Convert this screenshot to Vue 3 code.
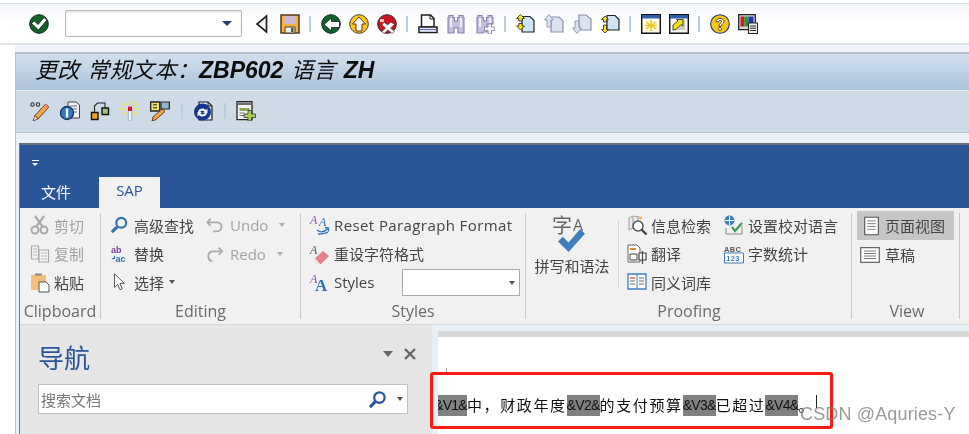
<script setup>
// 工具栏分组：图标 id 对应下面模板里的 symbol
const topTools = [
  ['back', 'save'],
  ['green', 'yellow', 'red'],
  ['print', 'find', 'findNext'],
  ['first', 'prev', 'next', 'last'],
  ['winNew', 'winLink'],
  ['help', 'monitor']
]
const subTools = [['glasses', 'docInfo', 'tree', 'wand', 'pencilBox'], ['refresh'], ['addDoc']]
const docParts = [
  { t: '&V1&', mark: true, cut: true },
  { t: '中，财政年度' },
  { t: '&V2&', mark: true },
  { t: '的支付预算' },
  { t: '&V3&', mark: true },
  { t: '已超过' },
  { t: '&V4&', mark: true },
  { t: '。' }
]
</script>

<template>
  <div class="page">
    <svg width="0" height="0" class="defs">
      <defs>
        <symbol id="check" viewBox="0 0 20 20">
          <circle cx="10" cy="10" r="9.300" fill="#12602a" stroke="#0b2a16" />
          <path d="M2.500 9.500l3-2.500 3.500 3.500 6-7 3 2.500-8.500 10z" fill="#fff" stroke="#0d1f14" stroke-width=".8" />
        </symbol>
        <symbol id="back" viewBox="0 0 20 20">
          <path d="M12.500 2v16L3 10z" fill="#f4f4f4" stroke="#222" stroke-width="1.700" />
        </symbol>
        <symbol id="save" viewBox="0 0 20 20">
          <path d="M1 1h18v18H1z" fill="#f6b43c" stroke="#4d3a22" stroke-width="1.500" />
          <path d="M4.500 2h11v8h-11z" fill="#cdb8d8" />
          <path d="M5 13h10v6H5z" fill="#f1ecf2" stroke="#4d3a22" />
          <path d="M11 14h2.500v4H11z" fill="#555" />
        </symbol>
        <symbol id="green" viewBox="0 0 20 20">
          <circle cx="10" cy="10" r="9.300" fill="#0f6429" stroke="#0d2c18" />
          <path d="M3 10.500L10.500 4v3.500h8v6h-8V17z" fill="#fff" stroke="#1a1a1a" stroke-width=".8" />
        </symbol>
        <symbol id="yellow" viewBox="0 0 20 20">
          <circle cx="10" cy="10" r="9.300" fill="#f3c818" stroke="#463c30" />
          <path d="M10 3l6.500 7H13v7H7v-7H3.500z" fill="#fff" stroke="#7a2d12" stroke-width="1" />
        </symbol>
        <symbol id="red" viewBox="0 0 20 20">
          <circle cx="10" cy="10" r="9.300" fill="#c8161f" stroke="#3d1a20" />
          <path d="M3 5h4v3H3z" fill="#fde" opacity=".8" />
          <path d="M7 8l3.500 3 3.500-3 3.500 2.500-4 3.500 4 3.500-2.500 2-4-3.500-4 3.500-2-2 3.500-3.500-3.500-3z" fill="#fff" stroke="#444" stroke-width=".7" />
        </symbol>
        <symbol id="print" viewBox="0 0 20 20">
          <path d="M3.500 1h9l3.500 3.500V13H3.500z" fill="#fff" stroke="#1c1c1c" stroke-width="1.500" />
          <path d="M12 1v4h4" fill="none" stroke="#1c1c1c" />
          <path d="M1 13h18v5.500H1z" fill="#fff" stroke="#1c1c1c" stroke-width="1.500" />
          <path d="M2 15.500h16" stroke="#5e6cc0" stroke-width="1.300" />
        </symbol>
        <symbol id="find" viewBox="0 0 20 20">
          <path d="M3 1.500h4v2h1.500V7h3V3.500H13v-2h4v2h1V19h-6v-5H8v5H2V3.500h1z" fill="#c3bfdd" stroke="#8483ab" stroke-width="1.100" />
          <path d="M5 4v9M15 4v9" stroke="#efeff7" stroke-width="2" />
        </symbol>
        <symbol id="findNext" viewBox="0 0 20 20">
          <path d="M3 1.500h4v2h1.500V7h3V3.500H13v-2h4v2h1V10h-6v8H8v1H2V3.500h1z" fill="#c3bfdd" stroke="#8483ab" stroke-width="1.100" />
          <path d="M5 4v9M15 4v5" stroke="#efeff7" stroke-width="2" />
          <path d="M13 10h3.500v3H20v3.500h-3.500V20H13v-3.500H9.500V13H13z" fill="#f4f4fa" stroke="#8483ab" stroke-width=".9" />
        </symbol>
        <symbol id="first" viewBox="0 0 20 20">
          <path d="M7 2.500h8l4 4v11.500H7z" fill="#cfe4f5" stroke="#222" stroke-width="1.200" />
          <path d="M4.500 0.500l4 4H6.200v2.500h-3.400V4.500H.5zM4.500 16l4-4H6.200V9.500h-3.400V12H.5z" transform="translate(1)" fill="#f7e612" stroke="#222" stroke-width=".8" />
        </symbol>
        <symbol id="prev" viewBox="0 0 20 20">
          <path d="M7 3h8l4 4v11H7z" fill="#dbe2ef" stroke="#8e90ad" stroke-width="1.200" />
          <path d="M5 .5L9.500 6H7v7H3V6H.5z" fill="#dbe2ef" stroke="#8e90ad" stroke-width=".9" />
        </symbol>
        <symbol id="next" viewBox="0 0 20 20">
          <path d="M7 1h7l5 4v11H7z" fill="#dbe2ef" stroke="#8e90ad" stroke-width="1.200" />
          <path d="M5 19.500L.5 14H3V7h4v7h2.500z" fill="#dbe2ef" stroke="#8e90ad" stroke-width=".9" />
        </symbol>
        <symbol id="last" viewBox="0 0 20 20">
          <path d="M7 1.500h8l4 4V16H7z" fill="#cfe4f5" stroke="#222" stroke-width="1.200" />
          <path d="M5 2l3.500 3.500H6.500V8h-3V5.500h-2zM5 19l3.500-3.500H6.500V11h-3v4.500h-2z" fill="#f7e612" stroke="#222" stroke-width=".8" />
        </symbol>
        <symbol id="winNew" viewBox="0 0 20 20">
          <path d="M.7.700h18.600v18.600H.7z" fill="#fbfbe8" stroke="#111" stroke-width="1.400" />
          <path d="M1 1h18v3.500H1z" fill="#2f5ea8" />
          <path d="M10 6v11M5 8l10 7M15 8L5 15M4 11.500h12" stroke="#eec818" stroke-width="1.500" />
        </symbol>
        <symbol id="winLink" viewBox="0 0 20 20">
          <path d="M.7.700h18.600v18.600H.7z" fill="#f4f4f4" stroke="#111" stroke-width="1.400" />
          <path d="M1 1h18v3.500H1z" fill="#2f5ea8" />
          <path d="M14.500 5.500H16V16H7v-1" fill="#ccc" />
          <path d="M4 16V11l5-4-1.500-1.500H14v6.500l-2-1.500-5 5z" fill="#f3e011" stroke="#222" stroke-width=".8" />
        </symbol>
        <symbol id="help" viewBox="0 0 20 20">
          <circle cx="10" cy="10" r="9.300" fill="#f5c61a" stroke="#22386e" stroke-width="1.100" />
          <path d="M6 7.500C6 3.500 14 3.500 14 7.500c0 2.500-3 2.500-3.200 5H9c0-3.500 2.700-3.500 2.700-5.200 0-1.600-3.300-1.400-3.300.7z" fill="#fff" stroke="#111" stroke-width=".7" />
          <circle cx="10" cy="15" r="1.500" fill="#fff" stroke="#111" stroke-width=".6" />
        </symbol>
        <symbol id="monitor" viewBox="0 0 20 20">
          <path d="M.7.700h16.600v15H.7z" fill="#d8d8d8" stroke="#222" stroke-width="1.300" />
          <path d="M2.500 2.500h4v10h-4z" fill="#c81e1e" />
          <path d="M6.500 2.500h4v10h-4z" fill="#1aa02c" />
          <path d="M10.500 2.500h5v10h-5z" fill="#2436b8" />
          <path d="M10.500 9h9v10.500h-9z" fill="#f2f2f2" stroke="#222" stroke-width="1.100" />
          <path d="M12 12h6M12 14.200h6M12 16.500h6" stroke="#222" />
        </symbol>
        <symbol id="glasses" viewBox="0 0 20 20">
          <path d="M5 14.500L15.500 3l3.500 3L8 18z" fill="#f2a648" stroke="#5a3210" stroke-width=".9" />
          <path d="M15.500 3l3.500 3-1.500 1.500-3.500-3z" fill="#e9838a" />
          <path d="M5 14.500L8 18l-5 2z" fill="#f5e2c0" stroke="#5a3210" stroke-width=".8" />
          <circle cx="2.500" cy="3.500" r="1.700" fill="none" stroke="#333" stroke-width="1.100" />
          <circle cx="8" cy="3.500" r="1.700" fill="none" stroke="#333" stroke-width="1.100" />
        </symbol>
        <symbol id="docInfo" viewBox="0 0 20 20">
          <path d="M8 1h8l3.500 3v13H8z" fill="#f2f2f2" stroke="#444" />
          <path d="M10 5h7M10 8h7M10 11h7" stroke="#6a6a8c" />
          <circle cx="7" cy="12" r="6.500" fill="#2d7ac2" stroke="#17305e" stroke-width="1.300" />
          <path d="M7 7.500v9" stroke="#fff" stroke-width="2.400" />
        </symbol>
        <symbol id="tree" viewBox="0 0 20 20">
          <path d="M1.500 11.500h6.500v7H1.500z" fill="#f0a52a" stroke="#111" stroke-width="1.400" />
          <path d="M12 7h6.500v6.500H12z" fill="#a8c078" stroke="#111" stroke-width="1.400" />
          <path d="M4.500 11V5l3-3h7.500v4.500" fill="none" stroke="#222" stroke-width="1.100" />
        </symbol>
        <symbol id="wand" viewBox="0 0 20 20">
          <path d="M8.300 9h3.400v11H8.300z" fill="#eef3f8" stroke="#8ea3b8" stroke-width=".7" />
          <path d="M8 5.500h4V10H8z" fill="#e01822" />
          <path d="M10 0v3.500M3 2l3 3M17 2l-3 3M0 8h4.500M20 8h-4.500M3 14l3-3M17 14l-3-3" stroke="#f3ea20" stroke-width="1.400" />
        </symbol>
        <symbol id="pencilBox" viewBox="0 0 20 20">
          <path d="M.7 1h9v9h-9z" fill="#eee26a" stroke="#222" stroke-width="1.300" />
          <path d="M11 1h8.300v7H11z" fill="#8fb6ce" stroke="#222" stroke-width="1.200" />
          <path d="M3 3.800h4M3 6.800h4" stroke="#222" />
          <path d="M3 16l9-8 3 2.500-9 8-4 1.500z" fill="#f2a648" stroke="#5a3210" stroke-width=".9" />
        </symbol>
        <symbol id="refresh" viewBox="0 0 20 20">
          <path d="M6 1h9l4 4v14H6z" fill="#e3e7ef" stroke="#1a1a1a" stroke-width="1.200" />
          <path d="M15 1v4h4" fill="none" stroke="#1a1a1a" />
          <circle cx="9.500" cy="11" r="8.500" fill="#17378f" />
          <path d="M5 10.500c1-3.500 6-4 8-1.500l1.500-1.500V12h-4.500l1.500-1.500C10 9 7.500 9.500 6.800 11.500zM14 12.500c-1 3.500-6 4-8 1.500L4.500 15.500V11H9l-1.500 1.500c1.500 1.500 4 1 4.700-1z" fill="#eef2fa" />
        </symbol>
        <symbol id="addDoc" viewBox="0 0 20 20">
          <path d="M1 .700h15v18H1z" fill="#f2f2f2" stroke="#222" stroke-width="1.300" />
          <path d="M2 1.500h13v2.500H2z" fill="#6c6c6c" />
          <path d="M3.500 7h10v3h-10z" fill="#8fa55e" />
          <path d="M3.500 12h5M3.500 14.500h5" stroke="#777" />
          <path d="M12 9.500h3.500V13H19.500v3.500h-4V20H12v-3.500H8V13h4z" fill="#a8d052" stroke="#333" stroke-width=".8" />
        </symbol>
      </defs>
    </svg>

    <div class="topbar">
      <svg class="ti ok"><use href="#check" /></svg>
      <div class="combo"><span class="combo-arrow"></span></div>
      <template v-for="(group, i) in topTools" :key="i">
        <span v-if="i" class="tsep"></span>
        <svg v-for="name in group" :key="name" class="ti" :class="name"><use :href="'#' + name" /></svg>
      </template>
    </div>
    <div class="strip"></div>

    <div class="frame">
      <div class="titlebar">
        <span class="cn">更改</span> <span class="cn">常规文本：</span>ZBP602 <span class="cn">语言</span> ZH
      </div>
      <div class="subbar">
        <template v-for="(group, i) in subTools" :key="i">
          <span v-if="i" class="tsep"></span>
          <svg v-for="name in group" :key="name" class="ti"><use :href="'#' + name" /></svg>
        </template>
      </div>

      <div class="canvas">
        <div class="word">
          <div class="quick"><span class="quick-bar"></span><span class="quick-arrow"></span></div>
          <div class="tabs">
            <span class="tab">文件</span>
            <span class="tab on">SAP</span>
          </div>

          <div class="ribbon">
            <section class="group g-clip">
              <div class="body">
                <div class="item off">
                  <svg class="ri" viewBox="0 0 20 20"><circle cx="5" cy="15" r="3.500" fill="none" stroke="#aaa" stroke-width="2" /><circle cx="14" cy="15" r="3.500" fill="none" stroke="#aaa" stroke-width="2" /><path d="M6 12L14 1M13 12L5 1" stroke="#aaa" stroke-width="2.200" /></svg>
                  剪切
                </div>
                <div class="item off">
                  <svg class="ri" viewBox="0 0 20 20"><path d="M1.500 2h7v13h-7zM9 6h9.500v12H9z" fill="#f4f4f4" stroke="#aaa" stroke-width="1.200" /><path d="M3 5h4M3 8h4M3 11h4M11 9h6M11 12h6M11 15h6" stroke="#bbb" /></svg>
                  复制
                </div>
                <div class="item">
                  <svg class="ri" viewBox="0 0 20 20"><path d="M1 3h15v15H1z" fill="#f2c078" /><path d="M5 3.500h7V1.500H5z" fill="#888" /><path d="M9 10h7l3 3v7H9z" fill="#fff" stroke="#555" /></svg>
                  粘贴
                </div>
              </div>
              <div class="label">Clipboard</div>
            </section>
            <i class="vsep"></i>

            <section class="group g-edit">
              <div class="body cols">
                <div class="col">
                  <div class="item">
                    <svg class="ri small" viewBox="0 0 20 20"><circle cx="12.500" cy="7.500" r="5.500" fill="none" stroke="#2f6fb5" stroke-width="2.400" /><path d="M8 12l-6 6" stroke="#2f6fb5" stroke-width="3.400" /></svg>
                    高级查找
                  </div>
                  <div class="item">
                    <svg class="ri small" viewBox="0 0 20 20"><text x="1" y="8.500" class="abc" fill="#7a3e9d">ab</text><text x="6" y="19" class="abc" fill="#2f6fb5">ac</text><path d="M5 12v3H2" fill="none" stroke="#2f6fb5" stroke-width="1.200" /></svg>
                    替换
                  </div>
                  <div class="item">
                    <svg class="ri small" viewBox="0 0 20 20"><path d="M5 1l0 15 3.500-3.500 2.500 6 2.500-1-2.500-6h5z" fill="#fff" stroke="#555" stroke-width="1.100" /></svg>
                    选择<span class="caret"></span>
                  </div>
                </div>
                <div class="col second">
                  <div class="item off">
                    <svg class="ri small" viewBox="0 0 20 20"><path d="M5 3L1.500 7 5 11M2 7h10c7 0 7 10 0 10H8" fill="none" stroke="#aaa" stroke-width="2" /></svg>
                    Undo<span class="caret light"></span>
                  </div>
                  <div class="item off">
                    <svg class="ri small" viewBox="0 0 20 20"><path d="M14 3l4 4-4 4M18 7H8c-7 0-7 10-1 11" fill="none" stroke="#aaa" stroke-width="2" /></svg>
                    Redo<span class="caret light"></span>
                  </div>
                </div>
              </div>
              <div class="label">Editing</div>
            </section>
            <i class="vsep"></i>

            <section class="group g-style">
              <div class="body">
                <div class="item">
                  <svg class="ri" viewBox="0 0 20 20"><text x="0" y="9" class="aa" fill="#8a4fb0">A</text><text x="9" y="11" class="aa" fill="#2f6fb5">A</text><path d="M7 15c3 2.500 7 2.500 11-1.500M15 12.500l3.500.5v3.500M8 19c3 0 7 0 10-2" fill="none" stroke="#2f6fb5" stroke-width="1.300" /></svg>
                  <span class="wide">Reset Paragraph Format</span>
                </div>
                <div class="item">
                  <svg class="ri" viewBox="0 0 20 20"><text x="0" y="10" class="aa" fill="#555">A</text><path d="M4 15l9-8 6 5-8 8H7z" fill="#e8808c" /><path d="M4 15l3 5h3l-5-6z" fill="#eee" /></svg>
                  重设字符格式
                </div>
                <div class="item">
                  <svg class="ri" viewBox="0 0 20 20"><text x="0" y="11" class="aa" fill="#8a4fb0">A</text><text x="5" y="19" class="aa big" fill="#2f6fb5">A</text></svg>
                  <span>Styles</span>
                  <div class="select"><span class="caret"></span></div>
                </div>
              </div>
              <div class="label">Styles</div>
            </section>
            <i class="vsep"></i>

            <section class="group g-spell">
              <div class="big-btn">
                <div class="spell-icon">
                  <span class="zi">字</span><span class="za">A</span>
                  <svg viewBox="0 0 30 26"><path d="M2 14l5-5 6 6L25 1l5 5-17 19z" fill="#3f7fbe" /></svg>
                </div>
                拼写和语法
              </div>
            </section>
            <i class="vsep short"></i>

            <section class="group g-proof">
              <div class="body cols">
                <div class="col">
                  <div class="item">
                    <svg class="ri" viewBox="0 0 20 20"><path d="M2 3l4-2v12l-4 2zM7 1l4 1v5" fill="#eee" stroke="#999" /><path d="M10 1l5 1-1 3" fill="#e9a94f" /><circle cx="11" cy="11" r="5" fill="#fff" stroke="#555" stroke-width="1.500" /><path d="M14.500 14.500l5 5" stroke="#444" stroke-width="2.400" /></svg>
                    信息检索
                  </div>
                  <div class="item">
                    <svg class="ri" viewBox="0 0 20 20"><path d="M1 1h9l3 3v14H1z" fill="#fff" stroke="#666" /><path d="M3 5h6" stroke="#e08a30" stroke-width="2" /><path d="M3 10h7v6H3z" fill="none" stroke="#444" /><path d="M12 9h7v7h-7zM15.500 7v13" fill="#fff" stroke="#444" stroke-width="1.200" /></svg>
                    翻译
                  </div>
                  <div class="item">
                    <svg class="ri" viewBox="0 0 20 20"><path d="M1 2h18v15H1z" fill="#fff" stroke="#3f7fbe" stroke-width="1.300" /><path d="M10 2v15" stroke="#3f7fbe" /><path d="M3 6h5" stroke="#e0662e" stroke-width="1.500" /><path d="M3 9h5M3 12h5M12 6h5M12 9h5M12 12h5" stroke="#666" /></svg>
                    同义词库
                  </div>
                </div>
                <div class="col second">
                  <div class="item">
                    <svg class="ri" viewBox="0 0 20 20"><circle cx="5.500" cy="5.500" r="5" fill="#3f7fbe" /><path d="M1 5.500h9M5.500 1v9" stroke="#fff" /><path d="M2 13v6h16v-8" fill="none" stroke="#888" /><path d="M8 12l3 4 7-8" fill="none" stroke="#3d9a52" stroke-width="2.200" /></svg>
                    设置校对语言
                  </div>
                  <div class="item">
                    <svg class="ri" viewBox="0 0 20 20"><text x="0" y="7.500" class="abc tiny" fill="#555">ABC</text><path d="M.5 9h19v10H.5z" fill="#fff" stroke="#3f7fbe" /><text x="2.200" y="17" class="abc tiny" fill="#3f7fbe">123</text></svg>
                    字数统计
                  </div>
                </div>
              </div>
              <div class="label">Proofing</div>
            </section>
            <i class="vsep"></i>

            <section class="group g-view">
              <div class="body">
                <div class="item active">
                  <svg class="ri page-ic" viewBox="0 0 16 20"><path d="M.7.700h14.600v18.600H.7z" fill="#fff" stroke="#555" stroke-width="1.200" /><path d="M3.500 4.500h9M3.500 7.500h9M3.500 10.500h9M3.500 13.500h9" stroke="#777" /></svg>
                  页面视图
                </div>
                <div class="item">
                  <svg class="ri draft" viewBox="0 0 20 16"><path d="M.7.700h18.600v14.600H.7z" fill="#fff" stroke="#666" stroke-width="1.200" /><path d="M4 4h12M4 6.500h12M4 9h12M4 11.500h12" stroke="#777" /></svg>
                  草稿
                </div>
              </div>
              <div class="label">View</div>
            </section>
            <i class="vsep"></i>
          </div>

          <div class="workspace">
            <aside class="nav">
              <div class="nav-head">
                <span class="nav-title">导航</span>
                <span class="nav-arrow"></span>
                <svg class="nav-close" viewBox="0 0 14 14"><path d="M2 2l10 10M12 2L2 12" stroke="#666" stroke-width="2.400" /></svg>
              </div>
              <div class="search">
                <span>搜索文档</span>
                <svg class="search-icon" viewBox="0 0 20 20"><circle cx="12" cy="8" r="5.500" fill="none" stroke="#2a5699" stroke-width="2.400" /><path d="M8 12l-6 6" stroke="#2a5699" stroke-width="3.200" /></svg>
                <span class="caret"></span>
              </div>
            </aside>
            <div class="doc">
              <div class="paper">
                <span class="mark-corner"></span>
                <div class="line">
                  <span v-for="(part, i) in docParts" :key="i" :class="{ hl: part.mark, cut: part.cut }">{{ part.t }}</span>
                  <i class="cursor"></i>
                </div>
              </div>
            </div>
          </div>
        </div>
      </div>
    </div>

    <!-- 截图上的标注和水印 -->
    <div class="red-box"></div>
    <div class="watermark">CSDN @Aquries-Y</div>
  </div>
</template>

<style>
html, body { margin: 0; background: #fff; }
</style>

<style scoped>
.page {
  position: relative;
  width: 969px;
  height: 434px;
  overflow: hidden;
  background: #fff;
  font-family: "Open Sans", "Noto Sans CJK SC", sans-serif;
  filter: blur(0.35px);
}
.defs { position: absolute; }
.topbar {
  box-sizing: border-box;
  height: 42px;
  margin-top: 3px;
  border-top: 1px solid #d5dbe2;
  border-bottom: 2px solid #dfe3e8;
  background: linear-gradient(#f4f6fa, #fff 50%);
  display: flex;
  align-items: center;
  padding-left: 29px;
}
.ti { width: 20px; height: 20px; flex: none; }
.topbar .ti { margin-right: 8.200px; }
.topbar .tsep { margin: 0 9.700px 0 1px; }
.topbar .ok { margin-right: 16px; }
.topbar .back { margin-right: 6px; }
.tsep { width: 2px; height: 16px; background: #b9cde0; flex: none; }
.combo {
  box-sizing: border-box;
  position: relative;
  width: 177px;
  height: 27px;
  margin-right: 12px;
  border: 1px solid #b8b8b8;
  border-radius: 2px;
  background: #fff;
  box-shadow: inset 0 1px 2px #ddd;
}
.combo-arrow {
  position: absolute;
  right: 9px;
  top: 10px;
  border: 5px solid transparent;
  border-top: 5px solid #2b3a6b;
  border-bottom: 0;
}
.strip { height: 7px; margin-left: 15px; background: #f1f4f8; }
.frame {
  margin-left: 15px;
  border-top: 2px solid #b0bdcb;
  border-left: 1px solid #b5c4d2;
  background: #e9f0f6;
}
.titlebar {
  box-sizing: border-box;
  height: 37px;
  padding-left: 19px;
  background: linear-gradient(#d0dfee, #adc3da);
  font: italic bold 23px/32px "Liberation Sans", "Noto Sans CJK SC", sans-serif;
  color: #0c0c0c;
  white-space: pre;
  word-spacing: 1.500px;
  border-bottom: 1px solid #e6edf4;
}
.cn { font-size: 22px; font-weight: 400; letter-spacing: 0.300px; }
.subbar {
  box-sizing: border-box;
  height: 42px;
  padding: 0 0 2px 14px;
  background: #cedbe6;
  border-bottom: 1px solid #b7c3cf;
  display: flex;
  align-items: center;
}
.subbar .ti { margin-right: 10px; }
.subbar .tsep { margin: 0 10px 0 1px; }
.canvas { padding: 10px 0 0 3px; }
.word {
  border-top: 2px solid #66707e;
  border-left: 1px solid #777;
  background: #2a5699;
}
.quick { height: 32px; position: relative; }
.quick-bar {
  position: absolute;
  left: 12px;
  top: 15px;
  width: 7px;
  height: 1px;
  background: #fff;
}
.quick-arrow {
  position: absolute;
  left: 12px;
  top: 18px;
  border: 3.500px solid transparent;
  border-top-color: #fff;
  border-bottom: 0;
}
.tabs { display: flex; height: 31px; }
.tab {
  width: 72px;
  margin-right: 7px;
  text-align: center;
  color: #fff;
  font-size: 15px;
  line-height: 31px;
}
.tab.on {
  width: 61px;
  margin-right: 0;
  background: #f1f1f1;
  color: #2a5699;
  font-size: 15px;
  line-height: 27px;
}
.ribbon {
  box-sizing: border-box;
  height: 117px;
  display: flex;
  background: #f1f1f1;
  border-bottom: 1px solid #d8d8d8;
  padding-top: 3px;
  color: #444;
  font-size: 15px;
  white-space: nowrap;
}
.group { box-sizing: border-box; flex: none; }
.body { height: 87px; }
.cols { display: flex; }
.item {
  display: flex;
  align-items: center;
  height: 28.500px;
  box-sizing: border-box;
}
.item.off { color: #a3a3a3; }
.ri { width: 20px; height: 20px; flex: none; margin-right: 4px; overflow: visible; }
.ri.small { width: 18px; height: 18px; margin-right: 6px; }
.label { text-align: center; color: #6a6a6a; font-size: 16px; line-height: 26px; }
.vsep { flex: none; width: 1px; height: 106px; background: #c8c8c8; margin-top: 2px; }
.vsep.short { height: 68px; margin-top: 9px; background: #d6d6d6; }
.caret {
  display: inline-block;
  margin-left: 5px;
  border: 3.500px solid transparent;
  border-top: 4px solid #555;
  border-bottom: 0;
}
.caret.light { border-top-color: #aaa; margin-left: 11px; }
.g-clip { width: 80px; padding-left: 10px; }
.g-clip .label { margin-left: -10px; }
.g-edit { width: 199px; padding-left: 9px; }
.g-edit .label { margin-left: -9px; }
.g-edit .second { margin-left: 12px; }
.g-style { width: 224px; padding-left: 9px; position: relative; }
.g-style .label { margin-left: -9px; }
.wide { letter-spacing: 0.400px; }
.select {
  box-sizing: border-box;
  position: absolute;
  left: 101px;
  top: 58px;
  width: 118px;
  height: 27px;
  background: #fff;
  border: 1px solid #ababab;
  display: flex;
  align-items: center;
  justify-content: flex-end;
  padding-right: 4px;
}
.g-spell { width: 92px; }
.big-btn { text-align: center; padding-top: 3px; line-height: 20px; }
.spell-icon {
  position: relative;
  height: 42px;
  color: #666;
}
.zi { position: absolute; left: 26px; top: 0; font-size: 20px; line-height: 24px; }
.za { position: absolute; left: 47px; top: 0; font-size: 16px; line-height: 22px; }
.spell-icon svg { position: absolute; left: 30px; top: 14px; width: 29px; height: 25px; }
.g-proof { width: 232px; padding-left: 8px; }
.g-proof .label { margin-left: -8px; width: 140px; }
.g-proof .second { margin-left: 13px; }
.g-view { width: 107px; padding-left: 5px; }
.g-view .label { margin-left: -2px; }
.g-view .item { height: 29px; width: 97px; padding-left: 7px; }
.g-view .active { background: #c6c6c6; }
.ri.page-ic { width: 15px; margin-right: 6px; }
.ri.draft { margin-left: -4px; margin-right: 5px; }
.workspace { display: flex; height: 109px; background: #e8eff5; }
.nav {
  box-sizing: border-box;
  width: 412px;
  background: #e6e6e6;
  padding: 15px 24px 0 18px;
  flex: none;
}
.nav-head { display: flex; align-items: flex-start; height: 44px; margin-right: -9px; }
.nav-title { font-size: 26px; color: #2a5699; line-height: 36px; }
.nav-arrow {
  margin: 11px 10px 0 auto;
  border: 5.500px solid transparent;
  border-top: 6px solid #666;
  border-bottom: 0;
}
.nav-close { width: 14px; height: 14px; margin-top: 7px; }
.search {
  box-sizing: border-box;
  height: 30px;
  background: #fff;
  border: 1px solid #c0c0c0;
  display: flex;
  align-items: center;
  padding: 0 4px 0 2px;
  font-size: 15px;
  color: #777;
}
.search-icon { width: 19px; height: 19px; margin-left: auto; margin-right: 5px; }
.doc {
  flex: 1;
  margin-left: 6px;
  padding-top: 6px;
}
.paper {
  position: relative;
  height: 100%;
  overflow: hidden;
  background: #fff;
  border-top: 6px solid #d8d8d8;
}
.mark-corner {
  position: absolute;
  left: 1px;
  top: 31px;
  width: 7px;
  height: 6px;
  border-right: 1px solid #aaa;
  border-bottom: 1px solid #aaa;
}
.line {
  position: absolute;
  left: 0;
  top: 58px;
  white-space: nowrap;
  display: flex;
  align-items: center;
  height: 21px;
  font: 15px/21px "Liberation Sans", "Noto Sans CJK SC", sans-serif;
  letter-spacing: 1.600px;
  color: #111;
}
.hl { background: #808080; letter-spacing: -0.700px; font-size: 14px; }
.hl.cut { margin-left: -4px; }
.cursor { width: 1px; height: 13px; background: #222; margin: -8px 0 0 1px; }
.red-box {
  position: absolute;
  left: 430px;
  top: 372px;
  width: 403px;
  height: 57px;
  box-sizing: border-box;
  border: 3px solid #ff1a0f;
  border-radius: 3px;
}
.watermark {
  position: absolute;
  left: 800px;
  top: 403px;
  font: 18px/22px "Liberation Sans", sans-serif;
  letter-spacing: 0.150px;
  color: rgba(120, 120, 120, 0.75);
}
.abc { font: bold 10px "Liberation Sans", sans-serif; }
.abc.tiny { font-size: 7.500px; letter-spacing: 0.300px; }
.aa { font: italic 12px "Liberation Serif", serif; }
.aa.big { font-size: 17px; font-style: normal; font-weight: bold; }
</style>
